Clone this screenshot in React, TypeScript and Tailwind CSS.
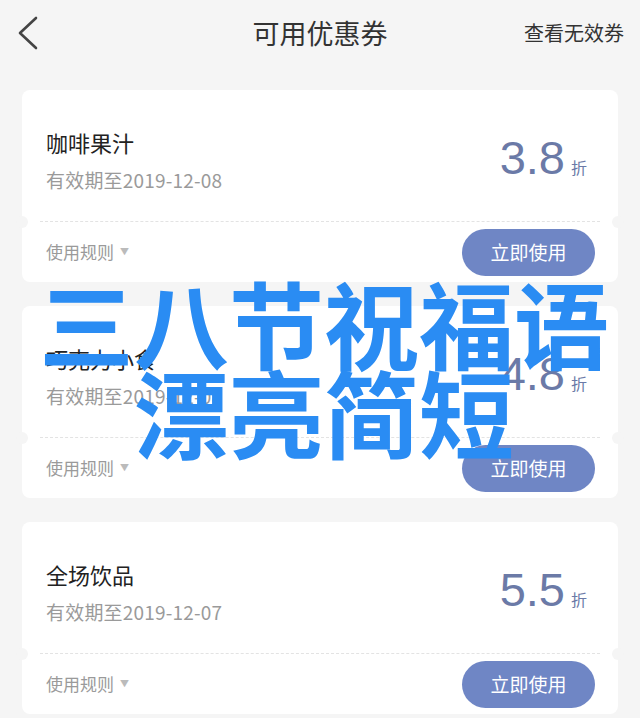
const coupons = [
  { name: "咖啡果汁", expire: "有效期至2019-12-08", rate: "3.8" },
  { name: "巧克力小食", expire: "有效期至2019-12-08", rate: "4.8" },
  { name: "全场饮品", expire: "有效期至2019-12-07", rate: "5.5" },
];

function CouponCard({ name, expire, rate }: { name: string; expire: string; rate: string }) {
  return (
    <div className="h-[192px] rounded-[8px] bg-white flex flex-col">
      <div className="h-[131px] flex justify-between pl-[24px] pr-[31px]">
        <div className="pt-[37px]">
          <div className="text-[22px] leading-[30px] text-[#222]">{name}</div>
          <div className="mt-[10px] text-[19px] leading-[25px] tracking-[0.2px] text-[#9a9a9a]">{expire}</div>
        </div>
        <div className="pt-[44px] flex items-baseline">
          <span className="font-['Liberation_Sans',sans-serif] text-[47px] leading-[47px] text-[#6b7aa7]">
            {rate}
          </span>
          <span className="ml-[6px] text-[16px] text-[#6b7aa7]">折</span>
        </div>
      </div>

      {/* dashed divider with side notches */}
      <div className="relative mx-[18px] border-t border-dashed border-[#e3e3e3]">
        <span className="absolute -left-[24px] -top-[6px] w-[12px] h-[12px] rounded-full bg-[#f5f5f5]" />
        <span className="absolute -right-[24px] -top-[6px] w-[12px] h-[12px] rounded-full bg-[#f5f5f5]" />
      </div>

      <div className="flex-1 flex items-center justify-between pl-[24px] pr-[23px]">
        <div className="flex items-center text-[17px] text-[#9a9a9a]">
          使用规则
          <span className="ml-[6px] text-[9px] text-[#bbb]">▼</span>
        </div>
        <button className="w-[133px] h-[47px] rounded-full bg-[#6f86c5] text-white text-[19px]">
          立即使用
        </button>
      </div>
    </div>
  );
}

export default function App() {
  return (
    <div className="relative w-[640px] h-[718px] overflow-hidden bg-[#f5f5f5] font-['Noto_Sans_CJK_SC',sans-serif]">
      <header className="h-[66px] grid grid-cols-[1fr_auto_1fr] items-center">
        <div className="pl-[17px]">
          <svg width="22" height="34" viewBox="0 0 22 34" fill="none">
            <path d="M19 2 L3 17 L19 32" stroke="#444" strokeWidth="2.6" strokeLinecap="round" strokeLinejoin="round" />
          </svg>
        </div>
        <h1 className="text-[27px] text-[#333]">可用优惠券</h1>
        <div className="pr-[16px] text-right text-[20px] text-[#333]">查看无效券</div>
      </header>

      <div className="px-[22px] pt-[24px] flex flex-col gap-[24px]">
        {coupons.map((c) => (
          <CouponCard key={c.rate} {...c} />
        ))}
      </div>

      {/* watermark caption laid over the list */}
      <div className="absolute inset-x-0 top-[277px] pl-[8px] text-center font-bold text-[95px] leading-[89px] text-[#2a8cf3]">
        <div>三八节祝福语</div>
        <div>漂亮简短</div>
      </div>
    </div>
  );
}
